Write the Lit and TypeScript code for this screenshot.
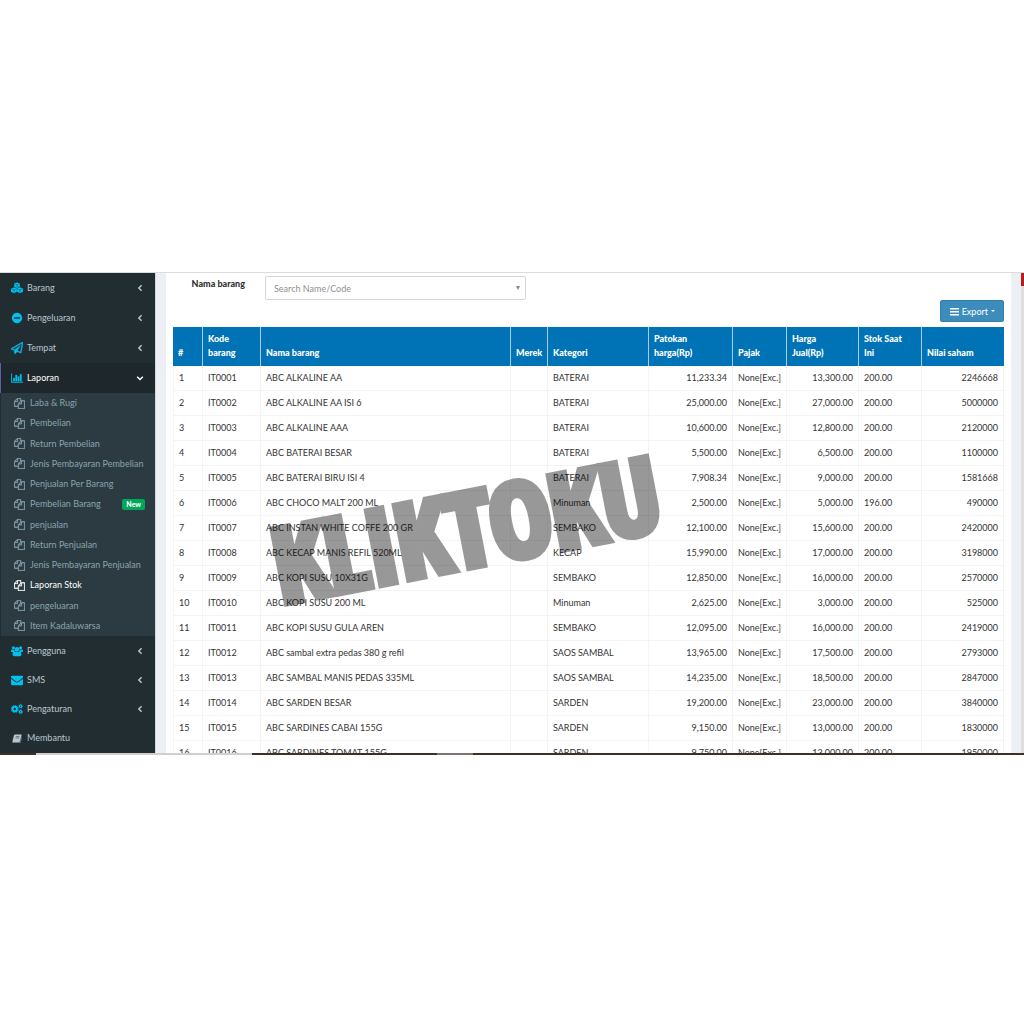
import { LitElement, html, css, svg, nothing } from "lit";
import { customElement, property } from "lit/decorators.js";

const ICONS: Record<string, { box: string; body: unknown }> = {
  cubes: {
    box: "0 0 28 26",
    body: svg`<path d="M14 0 20.500 2.500v7.500l-6.500 3-6.500-3V2.500z"/><path d="M7 11.500l6.700 2.700v7.800L7 25.500l-7-3.500v-7.500z"/><path d="M21 11.500l7 3v7.500l-7 3.500-6.700-3.500v-7.800z"/>
      <path d="M9.500 3.800 14 5.700l4.500-1.900M14 5.700v5M2 15.600l5 2.200 5-2.200M7 17.800v5.400M16 15.600l5 2.200 5-2.200M21 17.800v5.400" fill="none" stroke="#222d32" stroke-width="1"/>`,
  },
  minus: {
    box: "0 0 1792 1792",
    body: svg`<path d="M1344 960v-128q0-26-19-45t-45-19h-768q-26 0-45 19t-19 45v128q0 26 19 45t45 19h768q26 0 45-19t19-45zm320-64q0 209-103 385.500t-279.500 279.500-385.500 103-385.500-103-279.500-279.500-103-385.500 103-385.500 279.500-279.500 385.500-103 385.500 103 279.500 279.500 103 385.500z"/>`,
  },
  plane: {
    box: "0 0 1792 1792",
    body: svg`<path stroke="currentColor" stroke-width="60" d="M1764 11q33 24 27 64l-256 1536q-5 29-32 45-14 8-31 8-11 0-24-5l-527-215-298 327q-18 21-47 21-14 0-23-4-19-7-30-23.500t-11-36.500v-452l-472-193q-37-14-40-55-3-39 32-59l1664-960q35-21 68 2zm-342 1499l221-1323-1434 827 336 137 863-639-478 797z"/>`,
  },
  chart: {
    box: "0 0 2048 1792",
    body: svg`<path stroke="currentColor" stroke-width="50" d="M640 896v512h-256v-512h256zm384-512v1024h-256v-1024h256zm1024 1152v128h-2048v-1536h128v1408h1920zm-640-896v768h-256v-768h256zm384-384v1152h-256v-1152h256z"/>`,
  },
  files: {
    box: "0 0 1792 1792",
    body: svg`<path stroke="currentColor" stroke-width="40" d="M1696 384q40 0 68 28t28 68v1216q0 40-28 68t-68 28h-960q-40 0-68-28t-28-68v-288h-544q-40 0-68-28t-28-68v-672q0-40 20-88t48-76l408-408q28-28 76-48t88-20h416q40 0 68 28t28 68v328q68-40 128-40h416zm-544 213l-299 299h299v-299zm-640-384l-299 299h299v-299zm196 647l316-316v-416h-384v416q0 40-28 68t-68 28h-416v640h512v-256q0-40 20-88t48-76zm956 804v-1152h-384v416q0 40-28 68t-68 28h-416v640h896z"/>`,
  },
  users: {
    box: "0 0 30 26",
    body: svg`<circle cx="6" cy="5" r="4"/><circle cx="24" cy="5" r="4"/><circle cx="15" cy="8.500" r="5.500"/>
      <path d="M0 14.500C0 10.500 1 9.500 2.500 9.500c2 1.200 4.500 1.200 6 .5 0 2 .6 3 1.500 4-2 0-3.500.5-4.500 1.800H2c-1.300 0-2-.3-2-1.300zM30 14.500c0-4-1-5-2.500-5-2 1.200-4.500 1.200-6 .5 0 2-.6 3-1.500 4 2 0 3.500.5 4.500 1.800H28c1.300 0 2-.3 2-1.300z"/>
      <path d="M4 22c0-5 1.500-8 5.500-8 3 2.300 8 2.300 11 0 4 0 5.500 3 5.500 8 0 2.500-1.500 4-4 4H8c-2.500 0-4-1.500-4-4z"/>`,
  },
  envelope: {
    box: "0 0 1792 1792",
    body: svg`<path d="M1792 710v794q0 66-47 113t-113 47h-1472q-66 0-113-47t-47-113v-794q44 49 101 87 362 246 497 345 57 42 92.500 65.500t94.500 48 110 24.500h2q51 0 110-24.500t94.500-48 92.500-65.500q170-123 498-345 57-39 100-87zm0-294q0 79-49 151t-122 123q-376 261-468 325-10 7-42.500 31t-54 38.500-52 32.500-57.500 27-50 9h-2q-23 0-50-9t-57.500-27-52-32.500-54-38.500-42.500-31q-91-64-262-182.500t-205-142.500q-62-42-117-115.500t-55-136.500q0-78 41.500-130t118.500-52h1472q65 0 112.500 47t47.500 113z"/>`,
  },
  cogs: {
    box: "0 0 30 26",
    body: svg`<g fill="none" stroke="currentColor">
      <circle cx="9.500" cy="13" r="5.500" stroke-width="5"/><circle cx="9.500" cy="13" r="8.800" stroke-width="2.400" stroke-dasharray="3.500 3.410"/>
      <circle cx="24" cy="6" r="3" stroke-width="2.800"/><circle cx="24" cy="6" r="5" stroke-width="1.800" stroke-dasharray="2.100 1.830"/>
      <circle cx="24" cy="20" r="3" stroke-width="2.800"/><circle cx="24" cy="20" r="5" stroke-width="1.800" stroke-dasharray="2.100 1.830"/></g>`,
  },
  book: {
    box: "0 0 26 24",
    body: svg`<path fill-rule="evenodd" d="M8 1h15.500c1.500 0 2.200 1 1.800 2.500L21 19c-.4 1.300-1.300 2-2.600 2H5c-1 0-1.700.4-1.500 1 .2.700 1 .8 1.800.8H20c1 0 1.500-.5 1.800-1.300L25.500 8v3L22.500 22c-.4 1.300-1.200 2-2.500 2H4.500C2 24 .3 21.800.8 19.500L5 3.500C5.500 2 6.500 1 8 1zM10 6l-.5 1.600h10L20 6zM9 9.800l-.5 1.600h10l.5-1.600z"/>`,
  },
  bars: { box: "0 0 9 9", body: svg`<path d="M0 1h9v1.500H0zM0 4h9v1.500H0zM0 7h9v1.500H0z"/>` },
  left: { box: "0 0 10 10", body: svg`<path d="M7 1.500 3.500 5 7 8.500" fill="none" stroke="currentColor" stroke-width="1.800"/>` },
  down: { box: "0 0 10 10", body: svg`<path d="M1.500 3.500 5 7l3.500-3.500" fill="none" stroke="currentColor" stroke-width="1.800"/>` },
};

const icon = (name: string, cls: string) =>
  svg`<svg class=${cls} viewBox=${ICONS[name].box} fill="currentColor" aria-hidden="true">${ICONS[name].body}</svg>`;

type Item = { label: string; icon: string; chevron?: string };

const TOP: Item[] = [
  { label: "Barang", icon: "cubes", chevron: "left" },
  { label: "Pengeluaran", icon: "minus", chevron: "left" },
  { label: "Tempat", icon: "plane", chevron: "left" },
];
const BOTTOM: Item[] = [
  { label: "Pengguna", icon: "users", chevron: "left" },
  { label: "SMS", icon: "envelope", chevron: "left" },
  { label: "Pengaturan", icon: "cogs", chevron: "left" },
  { label: "Membantu", icon: "book" },
];
const REPORTS = [
  "Laba & Rugi", "Pembelian", "Return Pembelian", "Jenis Pembayaran Pembelian", "Penjualan Per Barang",
  "Pembelian Barang", "penjualan", "Return Penjualan", "Jenis Pembayaran Penjualan", "Laporan Stok",
  "pengeluaran", "Item Kadaluwarsa",
];

const STOCK: string[][] = [
  ["ABC ALKALINE AA", "BATERAI", "11,233.34", "13,300.00", "200.00", "2246668"],
  ["ABC ALKALINE AA ISI 6", "BATERAI", "25,000.00", "27,000.00", "200.00", "5000000"],
  ["ABC ALKALINE AAA", "BATERAI", "10,600.00", "12,800.00", "200.00", "2120000"],
  ["ABC BATERAI BESAR", "BATERAI", "5,500.00", "6,500.00", "200.00", "1100000"],
  ["ABC BATERAI BIRU ISI 4", "BATERAI", "7,908.34", "9,000.00", "200.00", "1581668"],
  ["ABC CHOCO MALT 200 ML", "Minuman", "2,500.00", "5,000.00", "196.00", "490000"],
  ["ABC INSTAN WHITE COFFE 200 GR", "SEMBAKO", "12,100.00", "15,600.00", "200.00", "2420000"],
  ["ABC KECAP MANIS REFIL 520ML", "KECAP", "15,990.00", "17,000.00", "200.00", "3198000"],
  ["ABC KOPI SUSU 10X31G", "SEMBAKO", "12,850.00", "16,000.00", "200.00", "2570000"],
  ["ABC KOPI SUSU 200 ML", "Minuman", "2,625.00", "3,000.00", "200.00", "525000"],
  ["ABC KOPI SUSU GULA AREN", "SEMBAKO", "12,095.00", "16,000.00", "200.00", "2419000"],
  ["ABC sambal extra pedas 380 g refil", "SAOS SAMBAL", "13,965.00", "17,500.00", "200.00", "2793000"],
  ["ABC SAMBAL MANIS PEDAS 335ML", "SAOS SAMBAL", "14,235.00", "18,500.00", "200.00", "2847000"],
  ["ABC SARDEN BESAR", "SARDEN", "19,200.00", "23,000.00", "200.00", "3840000"],
  ["ABC SARDINES CABAI 155G", "SARDEN", "9,150.00", "13,000.00", "200.00", "1830000"],
  ["ABC SARDINES TOMAT 155G", "SARDEN", "9,750.00", "13,000.00", "200.00", "1950000"],
];

@customElement("side-menu")
export class SideMenu extends LitElement {
  static styles = css`
    :host { display: block; background: #222d32; color: #b8c7ce; font-size: 9px; line-height: 12px; }
    ul { list-style: none; margin: 0; padding: 0; }
    .group { display: grid; grid-auto-rows: 30px; }
    .last { grid-auto-rows: 1fr; height: 117px; }
    a { display: flex; align-items: center; height: 100%; color: inherit; text-decoration: none; box-sizing: border-box; }
    .item { padding: 0 11px; gap: 4px; }
    .ico { width: 12px; height: 12px; color: #00c0ef; flex: none; }
    .item.plain .ico { color: #b8c7ce; height: 9px; }
    .chev { width: 8px; height: 8px; margin-left: auto; }
    .active { background: #1e282c; color: #fff; border-left: 1px solid #605ca8; padding-left: 10px; }
    .sub { display: grid; grid-auto-rows: 1fr; height: 243px; margin-left: 1px; background: #2c3b41; color: #8aa4af; }
    .sub a { padding: 0 10px 0 13px; gap: 5px; white-space: nowrap; }
    .file { width: 11px; height: 11px; flex: none; }
    .sub .current { color: #fff; }
    .tag { margin-left: auto; background: #00a65a; color: #fff; font-size: 7px; font-weight: 900; line-height: 11px; padding: 0 4px; border-radius: 2px; }
  `;

  private item(i: Item) {
    return html`<li><a href="#" class="item ${i.icon === "book" ? "plain" : ""}">${icon(i.icon, "ico")}<span>${i.label}</span>${i.chevron ? icon(i.chevron, "chev") : nothing}</a></li>`;
  }

  render() {
    return html`<nav aria-label="Menu">
      <ul class="group">
        ${TOP.map((i) => this.item(i))}
        <li><a href="#" class="item active" aria-expanded="true">${icon("chart", "ico")}<span>Laporan</span>${icon("down", "chev")}</a></li>
      </ul>
      <ul class="sub">
        ${REPORTS.map((r) => html`<li><a href="#" class=${r === "Laporan Stok" ? "current" : ""}>${icon("files", "file")}<span>${r}</span>${r === "Pembelian Barang" ? html`<span class="tag">New</span>` : nothing}</a></li>`)}
      </ul>
      <ul class="group last">${BOTTOM.map((i) => this.item(i))}</ul>
    </nav>`;
  }
}

@customElement("stock-table")
export class StockTable extends LitElement {
  @property({ attribute: false }) rows: string[][] = [];

  static styles = css`
    :host { display: block; }
    table { width: 100%; table-layout: fixed; border-collapse: separate; border-spacing: 0; color: #333; font-size: 9px; line-height: 14px; }
    th, td { box-sizing: border-box; padding: 0 5px; text-align: left; white-space: nowrap; }
    th { height: 39px; padding-bottom: 6px; vertical-align: bottom; line-height: 14px; background: #0073b7; color: #fff; border-right: 1px solid #a8cde6; font-weight: 900; }
    th:last-child { border-right-color: #0073b7; }
    td { height: 25px; border-right: 1px solid #f4f4f4; border-bottom: 1px solid #f4f4f4; }
    td:first-child { border-left: 1px solid #f4f4f4; }
    .c-no { width: 30px; } .c-code { width: 58px; } .c-brand { width: 37px; } .c-cat { width: 101px; }
    .c-cost { width: 84px; } .c-tax { width: 54px; } .c-price { width: 72px; } .c-qty { width: 63px; } .c-value { width: 82px; }
    .num { text-align: right; }
  `;

  render() {
    return html`<table>
      <colgroup>
        <col class="c-no" /><col class="c-code" /><col /><col class="c-brand" /><col class="c-cat" />
        <col class="c-cost" /><col class="c-tax" /><col class="c-price" /><col class="c-qty" /><col class="c-value" />
      </colgroup>
      <thead><tr>
        <th>#</th><th>Kode<br />barang</th><th>Nama barang</th><th>Merek</th><th>Kategori</th>
        <th>Patokan<br />harga(Rp)</th><th>Pajak</th><th>Harga<br />Jual(Rp)</th><th>Stok Saat<br />Ini</th><th>Nilai saham</th>
      </tr></thead>
      <tbody>
        ${this.rows.map(([name, cat, cost, price, qty, value], n) => html`<tr>
          <td>${n + 1}</td><td>IT${String(n + 1).padStart(4, "0")}</td><td>${name}</td><td></td><td>${cat}</td>
          <td class="num">${cost}</td><td>None[Exc.]</td><td class="num">${price}</td><td>${qty}</td><td class="num">${value}</td>
        </tr>`)}
      </tbody>
    </table>`;
  }
}

@customElement("app-root")
export class AppRoot extends LitElement {
  static styles = css`
    :host { display: flex; flex-direction: column; justify-content: center; min-height: 100vh; box-sizing: border-box; padding-top: 3px; background: #fff; font-family: Lato, "Noto Sans", sans-serif; }
    .window { border-top: 1px solid #dcdcdc; }
    .body { display: grid; grid-template-columns: 155px minmax(0, 1fr) 3px; }
    .page { position: relative; height: 0; min-height: 100%; overflow: hidden; box-sizing: border-box; background: #ecf0f5; border-left: 1px solid #d2d6de; padding: 0 10px; }
    .panel { background: #fff; padding: 3px 7px 0; }
    .filter { display: flex; align-items: flex-start; gap: 20px; }
    label { width: 72px; text-align: right; font-size: 9px; line-height: 15px; font-weight: 900; color: #333; }
    .pick { position: relative; flex: 0 1 261px; }
    select { appearance: none; display: block; width: 100%; height: 24px; box-sizing: border-box; border: 1px solid #d2d6de; border-radius: 2px; background: #fff; color: #8f8f8f; padding: 0 8px; font: inherit; font-size: 9px; }
    .pick::after { content: ""; position: absolute; right: 6px; top: 10px; border: 2px solid transparent; border-top: 4px solid #888; border-bottom: 0; pointer-events: none; }
    .tools { display: flex; justify-content: flex-end; padding-bottom: 5px; }
    button { display: flex; align-items: center; gap: 3px; height: 22px; padding: 0 8px 0 9px; border: 1px solid #367fa9; border-radius: 2px; background: #3c8dbc; color: #fff; font: inherit; font-size: 9px; }
    .bars { width: 9px; height: 9px; }
    .caret { border: 2px solid transparent; border-top-color: #fff; border-bottom: 0; }
    .mark { position: absolute; left: 114px; top: 204px; font-family: Impact, "Liberation Sans Narrow", "Open Sans Condensed", "DejaVu Sans Condensed", sans-serif; font-weight: 700; font-size: 103px; line-height: 100px; color: #000; -webkit-text-stroke: 8px #000; opacity: 0.4; transform: rotate(-11deg); pointer-events: none; white-space: nowrap; }
    .scroll { background: #dedede; }
    .thumb { height: 13px; background: #b81d1d; }
    .edge { display: flex; height: 2px; background: #3d3029; }
    .edge-dark { width: 36px; }
    .edge-light { width: 216px; background: #cfcfcf; }
    .edge-soft { width: 36px; margin-left: 185px; background: #7d7370; }
  `;

  render() {
    return html`<div class="window">
      <div class="body">
        <side-menu></side-menu>
        <main class="page">
          <div class="panel">
            <div class="filter">
              <label for="item">Nama barang</label>
              <div class="pick"><select id="item"><option>Search Name/Code</option></select></div>
            </div>
            <div class="tools"><button type="button">${icon("bars", "bars")}<span>Export</span><span class="caret"></span></button></div>
            <stock-table .rows=${STOCK}></stock-table>
          </div>
          <div class="mark">KLIKTOKU</div>
        </main>
        <div class="scroll"><div class="thumb"></div></div>
      </div>
      <div class="edge"><div class="edge-dark"></div><div class="edge-light"></div><div class="edge-soft"></div></div>
    </div>`;
  }
}
